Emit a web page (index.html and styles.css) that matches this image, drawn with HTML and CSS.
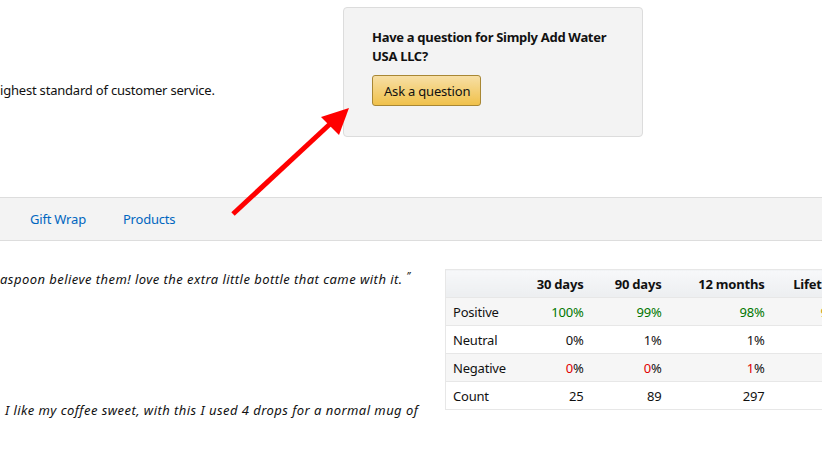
FILE: index.html
```html
<!DOCTYPE html>
<html lang="en">
<head>
  <meta charset="UTF-8">
  <title>Seller Profile</title>
  <meta name="viewport" content="width=device-width, initial-scale=1">
  <link rel="stylesheet" href="styles.css">
</head>
<body>
  <div class="page">
    <div class="top">
      <div class="about">
        <p>ighest standard of customer service.</p>
      </div>
      <div class="ask-box">
        <h4>Have a question for Simply Add Water USA LLC?</h4>
        <button class="ask-btn">Ask a question</button>
      </div>
    </div>

    <nav class="tabs">
      <a href="#">Gift Wrap</a>
      <a href="#">Products</a>
    </nav>

    <div class="feedback">
      <div class="quotes">
        <p class="quote q1">aspoon believe them! love the extra little bottle that came with it. <span class="close-mark">”</span></p>
        <p class="quote q2">I like my coffee sweet, with this I used 4 drops for a normal mug of</p>
      </div>
      <table class="ratings">
        <colgroup>
          <col class="c-label">
          <col class="c-30">
          <col class="c-90">
          <col class="c-12">
          <col class="c-life">
        </colgroup>
        <tr>
          <th class="label"></th>
          <th>30 days</th>
          <th>90 days</th>
          <th>12 months</th>
          <th>Lifetime</th>
        </tr>
        <tr class="alt">
          <td class="label">Positive</td>
          <td class="good">100%</td>
          <td class="good">99%</td>
          <td class="good">98%</td>
          <td class="fair">97%</td>
        </tr>
        <tr>
          <td class="label">Neutral</td>
          <td>0%</td>
          <td>1%</td>
          <td>1%</td>
          <td>1%</td>
        </tr>
        <tr class="alt">
          <td class="label">Negative</td>
          <td><span class="bad">0</span>%</td>
          <td><span class="bad">0</span>%</td>
          <td><span class="bad">1</span>%</td>
          <td><span class="bad">2</span>%</td>
        </tr>
        <tr>
          <td class="label">Count</td>
          <td>25</td>
          <td>89</td>
          <td>297</td>
          <td>412</td>
        </tr>
      </table>
    </div>

    <svg class="arrow" width="822" height="450" viewBox="0 0 822 450">
      <line x1="233" y1="214" x2="330" y2="124" stroke="#ff0000" stroke-width="5" />
      <polygon points="349,108 321,117 339,135" fill="#ff0000" />
    </svg>
  </div>
</body>
</html>
```

FILE: styles.css
```css
body {
  margin: 0;
  padding: 0;
  background: #fff;
  font-family: 'Noto Sans', 'Open Sans', Arial, sans-serif;
  font-size: 13px;
  letter-spacing: -0.2px;
  color: #111;
  overflow: hidden;
}
.page {
  position: relative;
  width: 822px;
  height: 450px;
  overflow: hidden;
}
.top {
  display: flex;
  height: 197px;
}
.about {
  width: 343px;
  flex-shrink: 0;
}
.about p {
  margin: 81px 0 0 0;
  line-height: 19px;
}
.ask-box {
  margin-top: 7px;
  width: 270px;
  height: 100px;
  padding: 20px 0 8px 28px;
  background: #f3f3f3;
  border: 1px solid #dcdcdc;
  border-radius: 4px;
}
.ask-box h4 {
  width: 245px;
  margin: 0 0 9px 0;
  font-size: 13px;
  font-weight: bold;
  letter-spacing: -0.3px;
  line-height: 19px;
}
.ask-btn {
  height: 31px;
  padding: 0 10px 0 11px;
  font-family: inherit;
  font-size: 13px;
  letter-spacing: -0.2px;
  color: #111;
  background: linear-gradient(to bottom, #f7dfa5, #f0c14b);
  border: 1px solid #a88734;
  border-radius: 3px;
  cursor: pointer;
}
.tabs {
  display: flex;
  align-items: center;
  gap: 37px;
  height: 42px;
  padding-left: 30px;
  background: #f3f3f3;
  border-top: 1px solid #dddddd;
  border-bottom: 1px solid #dddddd;
}
.tabs a {
  color: #0066c0;
  text-decoration: none;
}
.feedback {
  display: flex;
  align-items: flex-start;
}
.quotes {
  width: 445px;
  flex-shrink: 0;
}
.quote {
  margin: 0;
  font-style: italic;
  letter-spacing: 0.45px;
  line-height: 19px;
  color: #111;
}
.q1 {
  margin-top: 26px;
}
.q2 {
  margin-top: 112px;
  padding-left: 5px;
}
.close-mark {
  font-size: 10px;
  vertical-align: 4px;
}
.ratings {
  margin-top: 28px;
  border-collapse: collapse;
  table-layout: fixed;
  width: 408px;
  flex-shrink: 0;
}
.c-label { width: 75px; }
.c-30 { width: 71px; }
.c-90 { width: 78px; }
.c-12 { width: 103px; }
.c-life { width: 81px; }
.ratings th, .ratings td {
  box-sizing: border-box;
  height: 28px;
  padding: 0 8px;
  text-align: right;
  border-top: 1px solid #e7e7e7;
  border-bottom: 1px solid #e7e7e7;
}
.ratings tr > :first-child {
  border-left: 1px solid #e7e7e7;
}
.ratings th {
  font-weight: bold;
  background: linear-gradient(to bottom, #f7f8fa, #eceef0);
}
.ratings td.label {
  text-align: left;
  padding-left: 7px;
}
.ratings tr.alt td {
  background: #f6f6f6;
}
.good {
  color: #007600;
}
.fair {
  color: #c29d13;
}
.bad {
  color: #e00000;
}
.arrow {
  position: absolute;
  left: 0;
  top: 0;
  pointer-events: none;
}
```
